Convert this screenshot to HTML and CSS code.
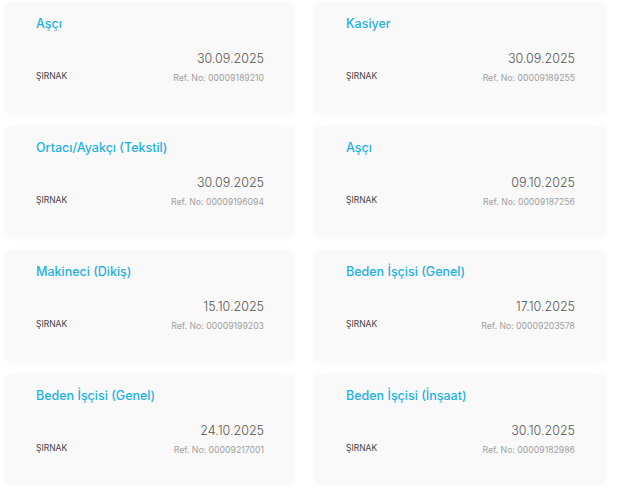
FILE: index.html
```html
<!DOCTYPE html>
<html lang="tr">
<head>
  <meta charset="UTF-8" />
  <meta name="viewport" content="width=device-width, initial-scale=1" />
  <title>İş İlanları</title>
  <link rel="stylesheet" href="styles.css">
</head>
<body>
  <main class="jobs">
    <div class="job">
      <div class="job-title">Aşçı</div>
      <div class="job-info">
        <span class="job-city">ŞIRNAK</span>
        <div class="job-meta">
          <span class="job-date">30.09.2025</span>
          <span class="job-ref">Ref. No: 00009189210</span>
        </div>
      </div>
    </div>

    <div class="job">
      <div class="job-title">Kasiyer</div>
      <div class="job-info">
        <span class="job-city">ŞIRNAK</span>
        <div class="job-meta">
          <span class="job-date">30.09.2025</span>
          <span class="job-ref">Ref. No: 00009189255</span>
        </div>
      </div>
    </div>

    <div class="job">
      <div class="job-title">Ortacı/Ayakçı (Tekstil)</div>
      <div class="job-info">
        <span class="job-city">ŞIRNAK</span>
        <div class="job-meta">
          <span class="job-date">30.09.2025</span>
          <span class="job-ref">Ref. No: 00009196094</span>
        </div>
      </div>
    </div>

    <div class="job">
      <div class="job-title">Aşçı</div>
      <div class="job-info">
        <span class="job-city">ŞIRNAK</span>
        <div class="job-meta">
          <span class="job-date">09.10.2025</span>
          <span class="job-ref">Ref. No: 00009187256</span>
        </div>
      </div>
    </div>

    <div class="job">
      <div class="job-title">Makineci (Dikiş)</div>
      <div class="job-info">
        <span class="job-city">ŞIRNAK</span>
        <div class="job-meta">
          <span class="job-date">15.10.2025</span>
          <span class="job-ref">Ref. No: 00009199203</span>
        </div>
      </div>
    </div>

    <div class="job">
      <div class="job-title">Beden İşçisi (Genel)</div>
      <div class="job-info">
        <span class="job-city">ŞIRNAK</span>
        <div class="job-meta">
          <span class="job-date">17.10.2025</span>
          <span class="job-ref">Ref. No: 00009203578</span>
        </div>
      </div>
    </div>

    <div class="job">
      <div class="job-title">Beden İşçisi (Genel)</div>
      <div class="job-info">
        <span class="job-city">ŞIRNAK</span>
        <div class="job-meta">
          <span class="job-date">24.10.2025</span>
          <span class="job-ref">Ref. No: 00009217001</span>
        </div>
      </div>
    </div>

    <div class="job">
      <div class="job-title">Beden İşçisi (İnşaat)</div>
      <div class="job-info">
        <span class="job-city">ŞIRNAK</span>
        <div class="job-meta">
          <span class="job-date">30.10.2025</span>
          <span class="job-ref">Ref. No: 00009182986</span>
        </div>
      </div>
    </div>
  </main>
</body>
</html>
```

FILE: styles.css
```css
body {
  font-family: 'Inter', 'Open Sans', sans-serif;
  background-color: #ffffff;
  color: #444;
  margin: 0;
  padding: 0;
}

.jobs {
  display: grid;
  grid-template-columns: 289px 290px;
  column-gap: 21px;
  row-gap: 13px;
  padding: 2px 0 0 5px;
}

.job {
  height: 111px;
  box-sizing: border-box;
  padding: 12px 30px 0 31px;
  background-color: #f9f9f9;
  border-radius: 6px;
  box-shadow: 0 1px 6px rgba(0, 0, 0, 0.04);
}

.job-title {
  font-size: 12.5px;
  line-height: 20px;
  font-weight: 500;
  color: #1eb1e6;
}

.job-info {
  display: flex;
  justify-content: space-between;
  align-items: flex-end;
  margin-top: 16px;
}

.job-city {
  font-size: 8.5px;
  line-height: 14px;
  color: #444;
  margin-bottom: 2px;
}

.job-meta {
  display: flex;
  flex-direction: column;
  align-items: flex-end;
}

.job-date {
  font-size: 12.5px;
  line-height: 18px;
  font-weight: 300;
  color: #555;
}

.job-ref {
  font-size: 8.7px;
  line-height: 14px;
  margin-top: 3px;
  color: #a0a0a0;
}
```
